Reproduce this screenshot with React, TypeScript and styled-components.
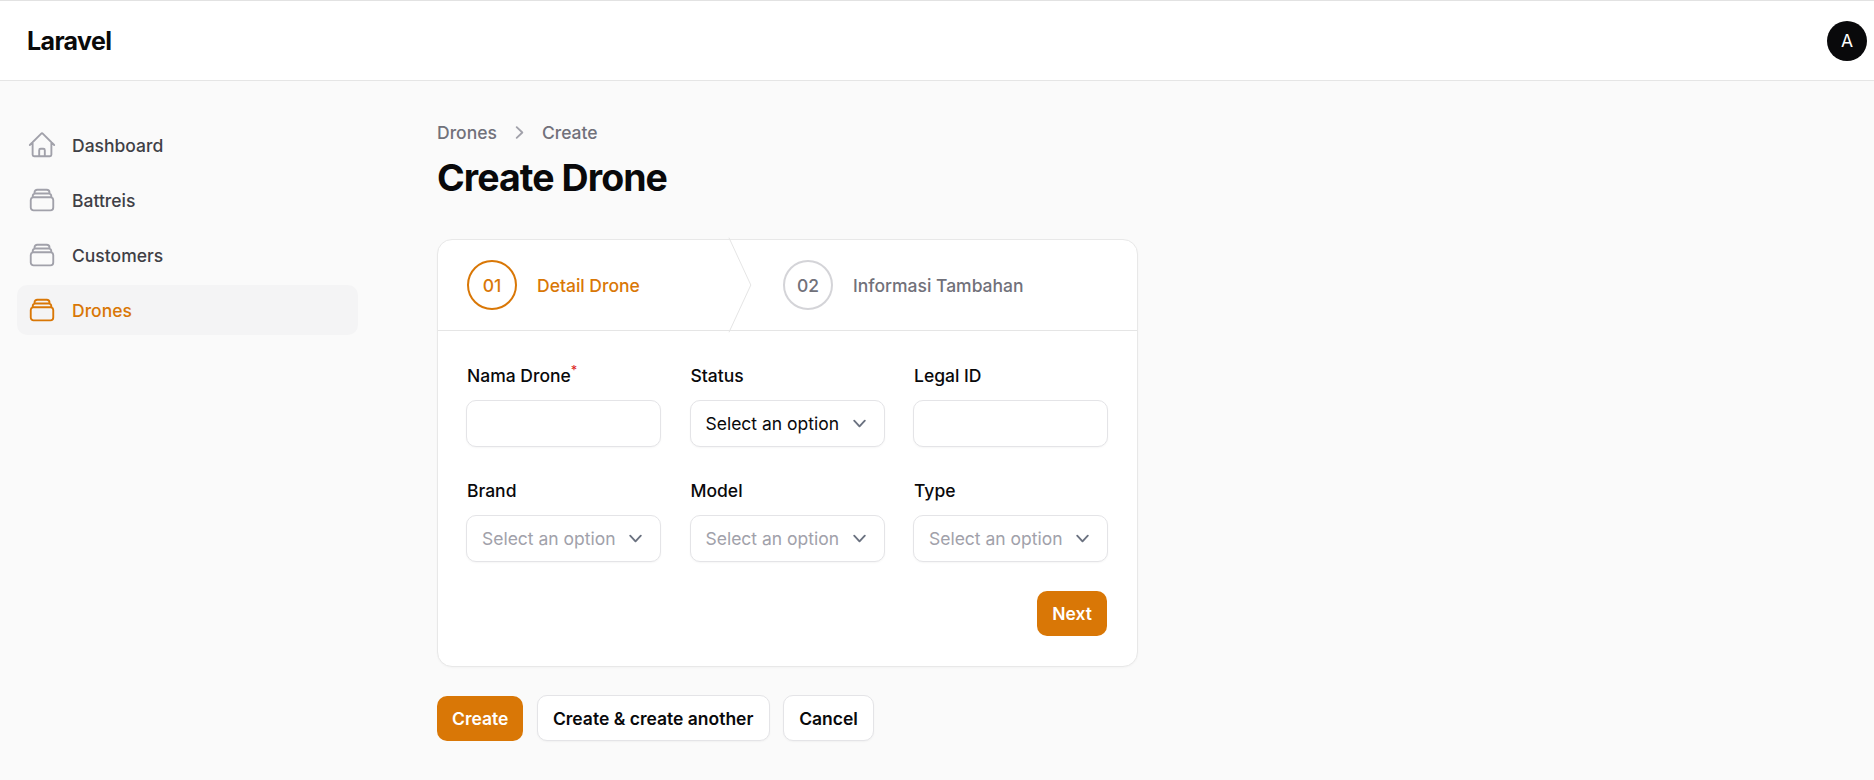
import { createGlobalStyle } from 'styled-components';
import styled from 'styled-components';

const GlobalStyle = createGlobalStyle`
  * {
    box-sizing: border-box;
  }
  html, body {
    margin: 0;
    padding: 0;
    background: #fafafa;
    font-family: Inter, "Liberation Sans", sans-serif;
  }
`;

const homePath =
  'M2.25 12l8.954-8.955c.44-.439 1.152-.439 1.591 0L21.75 12M4.5 9.75v10.125c0 .621.504 1.125 1.125 1.125H9.75v-4.875c0-.621.504-1.125 1.125-1.125h2.25c.621 0 1.125.504 1.125 1.125V21h4.125c.621 0 1.125-.504 1.125-1.125V9.75M8.25 21h8.25';
const stackPath =
  'M6 6.878V6a2.25 2.25 0 012.25-2.25h7.5A2.25 2.25 0 0118 6v.878m-12 0c.235-.083.487-.128.75-.128h10.5c.263 0 .515.045.75.128m-12 0A2.25 2.25 0 004.5 9v.878m13.5-3A2.25 2.25 0 0119.5 9v.878m0 0a2.246 2.246 0 00-.75-.128H5.25c-.263 0-.515.045-.75.128m15 0A2.25 2.25 0 0121 12v6a2.25 2.25 0 01-2.25 2.25H5.25A2.25 2.25 0 013 18v-6c0-.98.626-1.813 1.5-2.122';

const navItems = [
  { label: 'Dashboard', icon: homePath },
  { label: 'Battreis', icon: stackPath },
  { label: 'Customers', icon: stackPath },
  { label: 'Drones', icon: stackPath, active: true },
];

const fields = [
  { label: 'Nama Drone', required: true },
  { label: 'Status', select: true, value: 'Select an option', filled: true },
  { label: 'Legal ID' },
  { label: 'Brand', select: true, value: 'Select an option' },
  { label: 'Model', select: true, value: 'Select an option' },
  { label: 'Type', select: true, value: 'Select an option' },
];

function Chevron() {
  return (
    <SelectIcon viewBox="0 0 20 20" fill="currentColor">
      <path
        fillRule="evenodd"
        clipRule="evenodd"
        d="M5.23 7.21a.75.75 0 011.06.02L10 11.168l3.71-3.938a.75.75 0 111.08 1.04l-4.25 4.5a.75.75 0 01-1.08 0l-4.25-4.5a.75.75 0 01.02-1.06z"
      />
    </SelectIcon>
  );
}

export default function App() {
  return (
    <Page>
      <GlobalStyle />
      <Topbar>
        <Brand>Laravel</Brand>
        <Avatar>A</Avatar>
      </Topbar>
      <Body>
        <Sidebar>
          {navItems.map((item) => (
            <NavItem key={item.label} $active={item.active}>
              <NavIcon viewBox="0 0 24 24" fill="none" stroke="currentColor" strokeWidth="1.5" $active={item.active}>
                <path strokeLinecap="round" strokeLinejoin="round" d={item.icon} />
              </NavIcon>
              {item.label}
            </NavItem>
          ))}
        </Sidebar>
        <Main>
          <Breadcrumbs>
            <span>Drones</span>
            <CrumbIcon viewBox="0 0 20 20" fill="currentColor">
              <path
                fillRule="evenodd"
                clipRule="evenodd"
                d="M7.21 14.77a.75.75 0 01.02-1.06L11.168 10 7.23 6.29a.75.75 0 111.04-1.08l4.5 4.25a.75.75 0 010 1.08l-4.5 4.25a.75.75 0 01-1.06-.02z"
              />
            </CrumbIcon>
            <span>Create</span>
          </Breadcrumbs>
          <Title>Create Drone</Title>
          <Card>
            <Steps>
              <Step $width={315}>
                <StepCircle $active>01</StepCircle>
                <StepLabel $active>Detail Drone</StepLabel>
                <StepArrow viewBox="0 0 22 80" fill="none" preserveAspectRatio="none">
                  <path d="M0 -2L20 40L0 82" stroke="#e5e5e5" strokeWidth="1" strokeLinejoin="round" vectorEffect="non-scaling-stroke" />
                </StepArrow>
              </Step>
              <Step $indent={30}>
                <StepCircle>02</StepCircle>
                <StepLabel>Informasi Tambahan</StepLabel>
              </Step>
            </Steps>
            <FormBody>
              <FieldGrid>
                {fields.map((f) => (
                  <Field key={f.label}>
                    <Label>
                      {f.label}
                      {f.required && <Req>*</Req>}
                    </Label>
                    {f.select ? (
                      <SelectBox $filled={f.filled}>
                        {f.value}
                        <Chevron />
                      </SelectBox>
                    ) : (
                      <TextInput type="text" aria-label={f.label} />
                    )}
                  </Field>
                ))}
              </FieldGrid>
              <NextRow>
                <PrimaryButton>Next</PrimaryButton>
              </NextRow>
            </FormBody>
          </Card>
          <Actions>
            <PrimaryButton>Create</PrimaryButton>
            <SecondaryButton>Create &amp; create another</SecondaryButton>
            <SecondaryButton>Cancel</SecondaryButton>
          </Actions>
        </Main>
      </Body>
    </Page>
  );
}

const Page = styled.div`
  min-height: 780px;
  border-top: 1px solid #e2e2e2;
  background: #fafafa;
`;

const Topbar = styled.header`
  height: 80px;
  display: flex;
  align-items: center;
  justify-content: space-between;
  padding: 0 7px 0 27px;
  background: #fff;
  border-bottom: 1px solid #e5e5e5;
`;

const Brand = styled.div`
  font-size: 25px;
  font-weight: 700;
  letter-spacing: -0.625px;
  color: #0a0a0a;
`;

const Avatar = styled.div`
  width: 40px;
  height: 40px;
  border-radius: 50%;
  background: #09090b;
  color: #fff;
  font-size: 17.5px;
  display: flex;
  align-items: center;
  justify-content: center;
`;

const Body = styled.div`
  display: flex;
`;

const Sidebar = styled.nav`
  width: 375px;
  flex-shrink: 0;
  padding: 39px 17px 0;
  display: flex;
  flex-direction: column;
  gap: 5px;
`;

const NavItem = styled.a<{ $active?: boolean }>`
  height: 50px;
  display: flex;
  align-items: center;
  gap: 15px;
  padding: 0 10px;
  border-radius: 10px;
  font-size: 17.5px;
  font-weight: 500;
  color: ${(p) => (p.$active ? '#d97706' : '#3f3f46')};
  background: ${(p) => (p.$active ? '#f4f4f5' : 'transparent')};
`;

const NavIcon = styled.svg<{ $active?: boolean }>`
  width: 30px;
  height: 30px;
  flex-shrink: 0;
  color: ${(p) => (p.$active ? '#d97706' : '#a1a1aa')};
`;

const Main = styled.main`
  flex: 1;
  padding: 39px 0 0 62px;
`;

const Breadcrumbs = styled.div`
  display: flex;
  align-items: center;
  gap: 10px;
  height: 25px;
  font-size: 17.5px;
  font-weight: 500;
  color: #71717a;
`;

const CrumbIcon = styled.svg`
  width: 25px;
  height: 25px;
  color: #a1a1aa;
`;

const Title = styled.h1`
  margin: 10px 0 0;
  font-size: 37.5px;
  line-height: 45px;
  font-weight: 700;
  letter-spacing: -0.94px;
  color: #09090b;
`;

const Card = styled.section`
  width: 701px;
  margin-top: 39px;
  background: #fff;
  border: 1px solid #e8e8e8;
  border-radius: 15px;
  box-shadow: 0 1px 2px rgba(0, 0, 0, 0.03);
`;

const Steps = styled.div`
  display: flex;
  height: 91px;
  border-bottom: 1px solid #e5e5e5;
`;

const Step = styled.div<{ $width?: number; $indent?: number }>`
  position: relative;
  flex: ${(p) => (p.$width ? `0 0 ${p.$width}px` : '1')};
  display: flex;
  align-items: center;
  gap: 20px;
  padding-left: ${(p) => p.$indent ?? 29}px;
`;

const StepCircle = styled.div<{ $active?: boolean }>`
  width: 50px;
  height: 50px;
  border-radius: 50%;
  display: flex;
  align-items: center;
  justify-content: center;
  font-size: 17.5px;
  font-weight: 500;
  border: 2px solid ${(p) => (p.$active ? '#d97706' : '#d4d4d8')};
  color: ${(p) => (p.$active ? '#d97706' : '#71717a')};
`;

const StepLabel = styled.span<{ $active?: boolean }>`
  font-size: 17.5px;
  font-weight: 500;
  color: ${(p) => (p.$active ? '#d97706' : '#71717a')};
`;

const StepArrow = styled.svg`
  position: absolute;
  top: 0;
  right: 0;
  width: 24px;
  height: 90px;
  overflow: visible;
`;

const FormBody = styled.div`
  padding: 32px 29px 30px 28px;
`;

const FieldGrid = styled.div`
  display: grid;
  grid-template-columns: repeat(3, 1fr);
  column-gap: 28.5px;
  row-gap: 31px;
`;

const Field = styled.div`
  display: flex;
  flex-direction: column;
  gap: 12px;
`;

const Label = styled.label`
  font-size: 17.5px;
  line-height: 25px;
  font-weight: 500;
  color: #09090b;
  padding-left: 1px;
`;

const Req = styled.sup`
  color: #dc2626;
  font-size: 12.5px;
  line-height: 0;
`;

const TextInput = styled.input`
  height: 47px;
  width: 100%;
  border: 1px solid #e4e4e7;
  border-radius: 10px;
  background: #fff;
  box-shadow: 0 1px 2px rgba(0, 0, 0, 0.04);
  outline: none;
`;

const SelectBox = styled.div<{ $filled?: boolean }>`
  height: 47px;
  display: flex;
  align-items: center;
  justify-content: space-between;
  padding: 0 12px 0 15px;
  border: 1px solid #e4e4e7;
  border-radius: 10px;
  background: #fff;
  box-shadow: 0 1px 2px rgba(0, 0, 0, 0.04);
  font-size: 17.5px;
  white-space: nowrap;
  color: ${(p) => (p.$filled ? '#09090b' : '#a1a1aa')};
`;

const SelectIcon = styled.svg`
  width: 25px;
  height: 25px;
  flex-shrink: 0;
  color: #6b7280;
`;

const NextRow = styled.div`
  display: flex;
  justify-content: flex-end;
  margin-top: 29px;
  padding-right: 1px;
`;

const PrimaryButton = styled.button`
  height: 45px;
  padding: 0 15px;
  border: none;
  border-radius: 10px;
  background: #d97706;
  color: #fff;
  font-family: inherit;
  font-size: 17.5px;
  font-weight: 600;
`;

const SecondaryButton = styled.button`
  height: 46px;
  padding: 0 15.25px;
  border: 1px solid #e4e4e7;
  border-radius: 10px;
  background: #fff;
  color: #09090b;
  font-family: inherit;
  font-size: 17.5px;
  font-weight: 600;
  box-shadow: 0 1px 2px rgba(0, 0, 0, 0.04);
`;

const Actions = styled.div`
  display: flex;
  align-items: center;
  gap: 13.25px;
  margin-top: 28px;
`;
